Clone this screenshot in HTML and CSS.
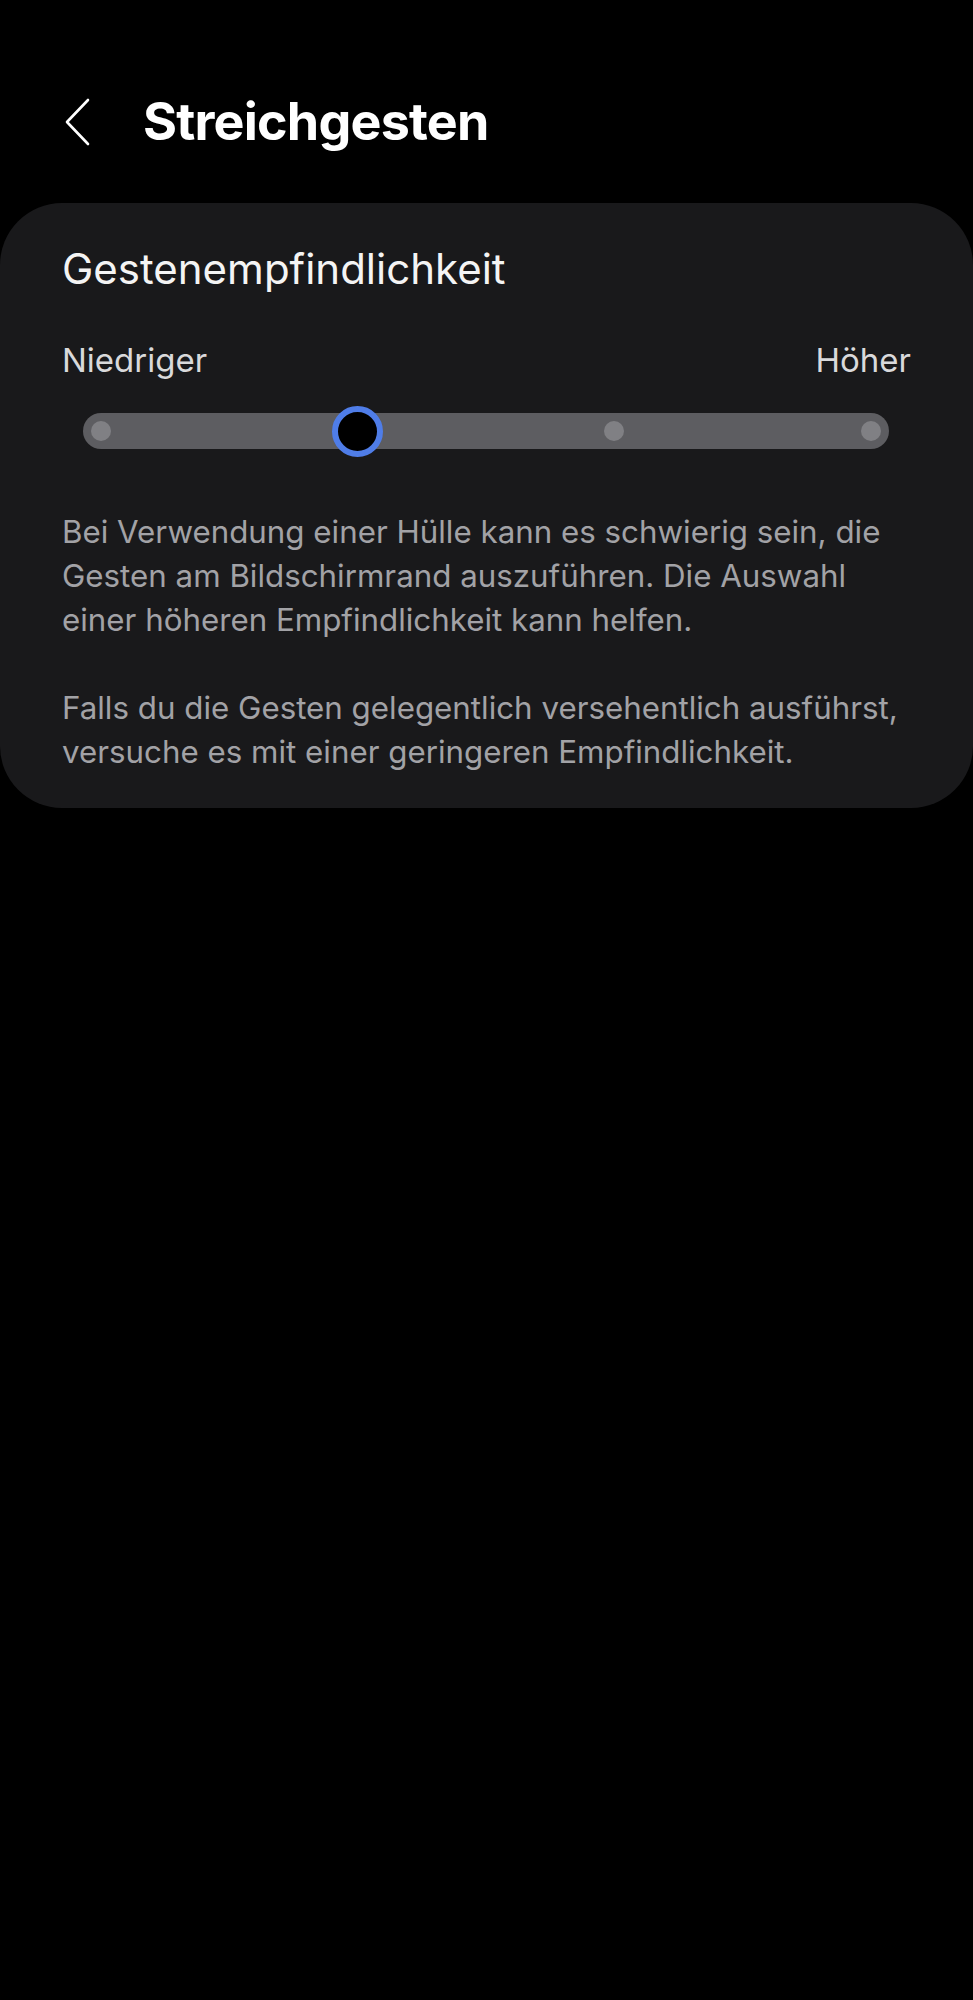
FILE: index.html
```html
<!DOCTYPE html>
<html lang="de">
<head>
<meta charset="utf-8">
<title>Streichgesten</title>
<link rel="stylesheet" href="styles.css">
</head>
<body>
<header class="appbar">
  <svg class="back" viewBox="0 0 28 50" width="28" height="50" aria-hidden="true">
    <path d="M24 3 L3 25 L24 47" fill="none" stroke="#ffffff" stroke-width="2.6" stroke-linecap="round" stroke-linejoin="round"/>
  </svg>
  <h1 class="title">Streichgesten</h1>
</header>
<section class="card">
  <h2 class="card-title">Gestenempfindlichkeit</h2>
  <div class="labels">
    <span>Niedriger</span>
    <span>Höher</span>
  </div>
  <div class="track">
    <span class="stop"></span>
    <span class="stop stop-active"><span class="thumb"></span></span>
    <span class="stop"></span>
    <span class="stop"></span>
  </div>
  <p class="desc">Bei Verwendung einer Hülle kann es schwierig sein, die Gesten am Bildschirmrand auszuführen. Die Auswahl einer höheren Empfindlichkeit kann helfen.</p>
  <p class="desc desc-second">Falls du die Gesten gelegentlich versehentlich ausführst, versuche es mit einer geringeren Empfindlichkeit.</p>
</section>
</body>
</html>
```
FILE: styles.css
```css
html, body {
  margin: 0;
  padding: 0;
  background: #000000;
}
body {
  font-family: Inter, "Noto Sans", "Liberation Sans", sans-serif;
  color: #ffffff;
  width: 973px;
  min-height: 2000px;
}
.appbar {
  display: flex;
  align-items: center;
  height: 80px;
  padding-top: 82px;
}
.back {
  display: block;
  margin-left: 64px;
  flex: none;
}
.title {
  margin: 0 0 0 51px;
  font-size: 52px;
  line-height: 64px;
  font-weight: 700;
  color: #ffffff;
  letter-spacing: -0.8px;
}
.card {
  margin-top: 41px;
  background: #19191b;
  border-radius: 62px;
  padding: 41px 62px 34px;
}
.card-title {
  margin: 0;
  font-size: 42px;
  line-height: 50px;
  font-weight: 400;
  color: #f4f4f4;
}
.labels {
  display: flex;
  justify-content: space-between;
  margin-top: 46px;
  font-size: 33px;
  line-height: 40px;
  color: #d9d9db;
}
.track {
  display: flex;
  justify-content: space-between;
  align-items: center;
  height: 36px;
  margin: 33px 22px 0 21px;
  padding: 0 8px;
  border-radius: 18px;
  background: #5d5d61;
}
.stop {
  display: flex;
  justify-content: center;
  align-items: center;
  width: 20px;
  height: 20px;
  border-radius: 50%;
  background: #808084;
  flex: none;
}
.stop-active {
  background: transparent;
}
.thumb {
  flex: none;
  width: 51px;
  height: 51px;
  box-sizing: border-box;
  border-radius: 50%;
  border: 6px solid #4f7de8;
  background: #000000;
}
.desc {
  margin: 61px 0 0;
  font-size: 31.3px;
  line-height: 44px;
  color: #a2a2a6;
}
.desc-second {
  margin-top: 44px;
}
```
